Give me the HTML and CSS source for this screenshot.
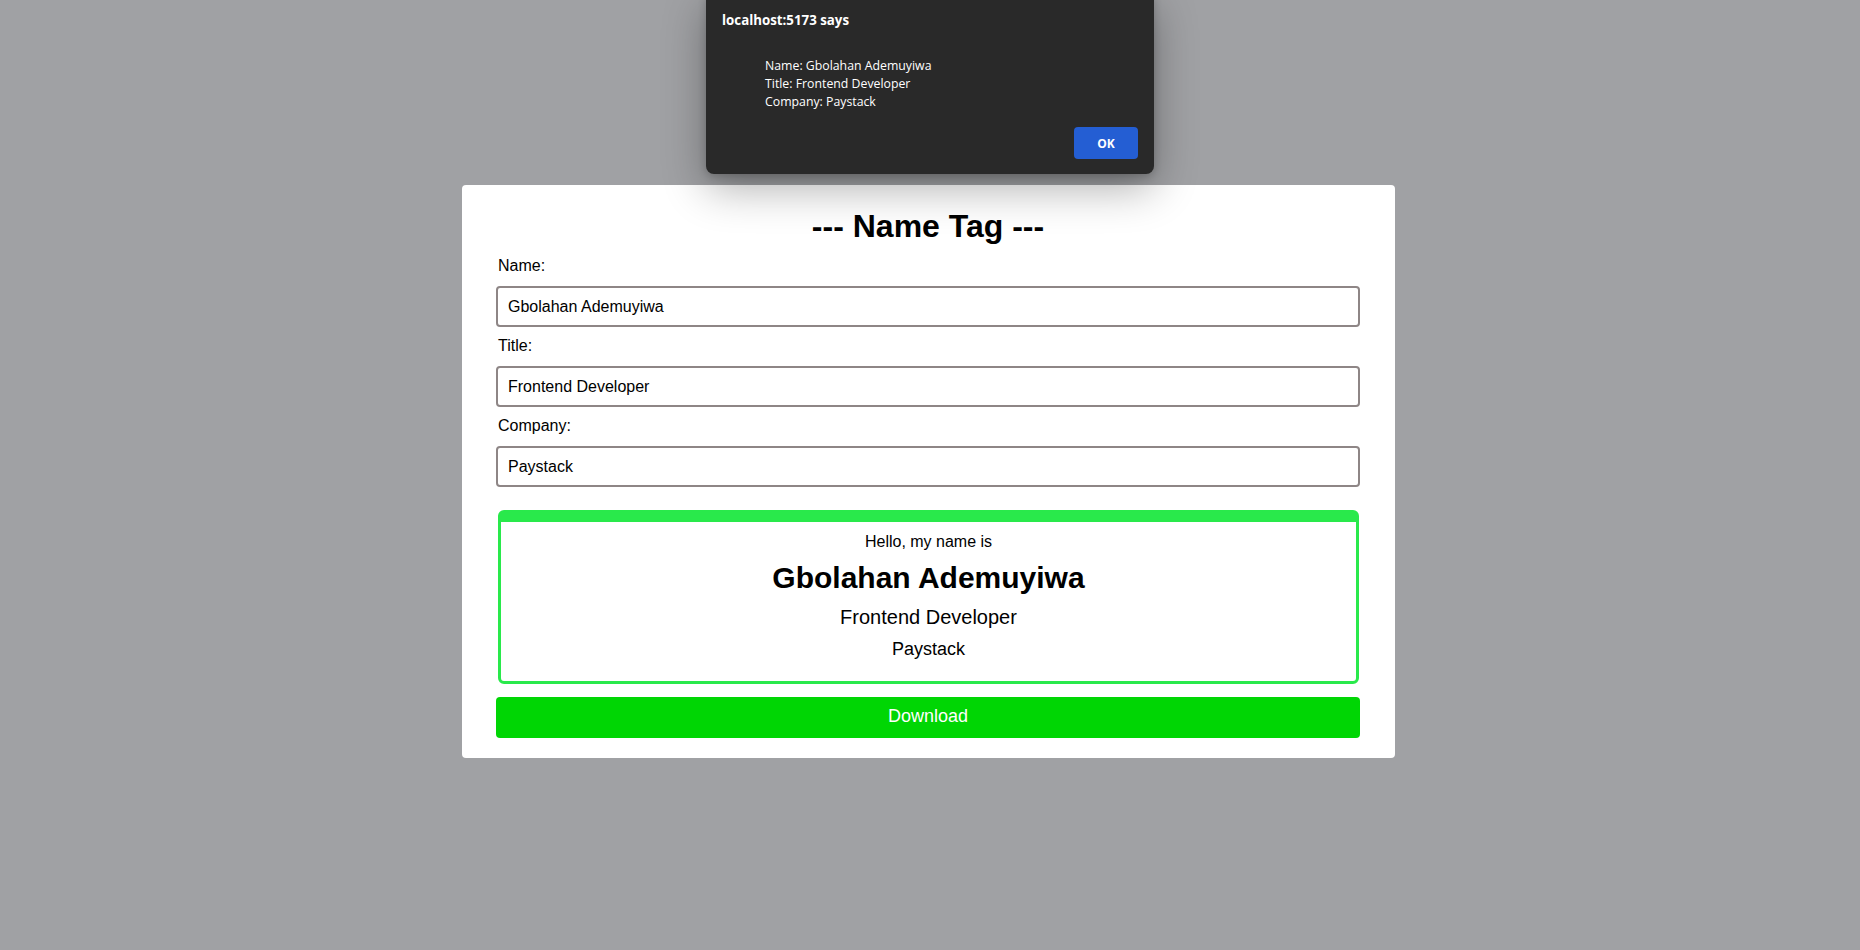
FILE: index.html
```html
<!DOCTYPE html>
<html lang="en">
<head>
<meta charset="utf-8">
<title>Name Tag</title>
<link rel="stylesheet" href="styles.css">
</head>
<body>
<main class="page">
  <section class="card">
    <h1 class="card-title">--- Name Tag ---</h1>
    <label class="field-label" for="name">Name:</label>
    <input class="field-input" id="name" type="text" value="Gbolahan Ademuyiwa">
    <label class="field-label" for="title">Title:</label>
    <input class="field-input" id="title" type="text" value="Frontend Developer">
    <label class="field-label" for="company">Company:</label>
    <input class="field-input" id="company" type="text" value="Paystack">
    <div class="tag">
      <p class="tag-hello">Hello, my name is</p>
      <h2 class="tag-name">Gbolahan Ademuyiwa</h2>
      <p class="tag-title">Frontend Developer</p>
      <p class="tag-company">Paystack</p>
    </div>
    <button class="download-btn" type="button">Download</button>
  </section>
</main>
<div class="dialog" role="alertdialog">
  <div class="dialog-title">localhost:5173 says</div>
  <div class="dialog-message">
    <div>Name: Gbolahan Ademuyiwa</div>
    <div>Title: Frontend Developer</div>
    <div>Company: Paystack</div>
  </div>
  <div class="dialog-actions">
    <button class="dialog-ok" type="button">OK</button>
  </div>
</div>
</body>
</html>
```
FILE: styles.css
```css
* { box-sizing: border-box; }

html, body {
  margin: 0;
  padding: 0;
}

body {
  background: #a0a1a4;
  font-family: "Liberation Sans", Arial, sans-serif;
  color: #000;
  min-height: 950px;
  position: relative;
  overflow: hidden;
}

.page {
  display: flex;
  justify-content: center;
  padding-top: 185px;
  padding-right: 3px;
}

.card {
  width: 933px;
  background: #fff;
  border-radius: 4px;
  padding: 23px 35px 20px 34px;
  display: flex;
  flex-direction: column;
}

.card-title {
  margin: 0;
  font-size: 32px;
  font-weight: bold;
  line-height: 37px;
  text-align: center;
}

.field-label {
  display: block;
  font-size: 16px;
  line-height: 18px;
  padding-left: 2px;
  margin-top: 10px;
}

.card-title + .field-label { margin-top: 12px; }

.field-input {
  display: block;
  width: 100%;
  height: 41px;
  margin: 11px 0 0;
  padding: 0 10px;
  border: 2px solid #8e8686;
  border-radius: 4px;
  font-family: "Liberation Sans", Arial, sans-serif;
  font-size: 16px;
  color: #000;
  background: #fff;
  outline: none;
}

.tag {
  margin: 23px 1px 0 2px;
  border: 3px solid #29e94b;
  border-top-width: 12px;
  border-radius: 6px;
  padding: 11px 0 21px;
  display: flex;
  flex-direction: column;
  align-items: center;
  gap: 10px;
  text-align: center;
}

.tag p, .tag h2 { margin: 0; }

.tag-hello { font-size: 16px; line-height: 18.4px; }
.tag-name { font-size: 30px; font-weight: bold; line-height: 34.5px; }
.tag-title { font-size: 20px; line-height: 23px; }
.tag-company { font-size: 18px; line-height: 20.7px; }

.download-btn {
  margin-top: 13px;
  height: 41px;
  width: 100%;
  border: none;
  border-radius: 4px;
  background: #00d604;
  color: #fff;
  font-family: "Liberation Sans", Arial, sans-serif;
  font-size: 18px;
  padding: 0 0 2px;
}

/* native alert overlay */
.dialog {
  position: absolute;
  top: -8px;
  left: 706px;
  width: 448px;
  height: 182px;
  background: #292929;
  border-radius: 8px;
  box-shadow: 0 14px 44px rgba(0, 0, 0, 0.32), 0 2px 8px rgba(0, 0, 0, 0.2);
  padding: 19px 16px 15px;
  color: #fff;
  font-family: "Open Sans", "Noto Sans", sans-serif;
  display: flex;
  flex-direction: column;
}

.dialog-title {
  font-size: 13.3px;
  font-weight: bold;
  line-height: 18px;
}

.dialog-message {
  margin-top: 28px;
  padding-left: 43px;
  font-size: 12.3px;
  line-height: 17.8px;
}

.dialog-actions {
  margin-top: auto;
  display: flex;
  justify-content: flex-end;
}

.dialog-ok {
  width: 64px;
  height: 32px;
  border: none;
  border-radius: 4px;
  background: #245ed3;
  color: #fff;
  font-family: "Open Sans", "Noto Sans", sans-serif;
  font-size: 12px;
  font-weight: bold;
}
```
